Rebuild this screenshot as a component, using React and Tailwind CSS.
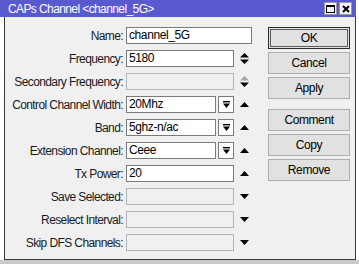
import React from 'react';

const font = { fontFamily: '"Liberation Sans", Arial, sans-serif' };

// small arrow glyphs drawn to the right of the fields
const UpDown = ({ dimUp }) => (
    <svg width="9" height="11" viewBox="0 0 9 11">
        <polygon points="4.5,0 9,4.5 0,4.5" fill={dimUp ? '#a6a6a6' : '#000'}/>
        <polygon points="0,6.5 9,6.5 4.5,11" fill="#000"/>
    </svg>
);

const Up = () => (
    <svg width="9" height="5" viewBox="0 0 9 5">
        <polygon points="4.5,0 9,5 0,5" fill="#000"/>
    </svg>
);

const Down = () => (
    <svg width="9" height="5" viewBox="0 0 9 5">
        <polygon points="0,0 9,0 4.5,5" fill="#000"/>
    </svg>
);

const DropIcon = () => (
    <svg width="7" height="7" viewBox="0 0 7 7">
        <rect x="0" y="0" width="7" height="1.4" fill="#000"/>
        <polygon points="0,2.5 7,2.5 3.5,7" fill="#000"/>
    </svg>
);

const Row = ({ label, value, kind = 'plain', disabled, arrow }) => (
    <div className="flex items-center h-[17px]">
        <div className="w-[119px] flex justify-end pr-[3px] text-[12px] tracking-[-0.6px] text-[#1a1a1a] whitespace-nowrap">
            <span>{label}</span>
        </div>
        {kind === 'full' ? (
            <div className="w-[126px] h-[17px] bg-white border border-[#7a7a7a] px-[2px] text-[12px] tracking-[-0.4px] leading-[15px] text-black">{value}</div>
        ) : (
            <>
                {kind === 'drop' ? (
                    <div className="flex items-center">
                        <div className="w-[90px] h-[17px] bg-white border border-[#7a7a7a] px-[2px] text-[12px] tracking-[-0.4px] leading-[15px] text-black">{value}</div>
                        <div className="ml-[2px] w-[16px] h-[17px] bg-white border border-[#7a7a7a] flex items-center justify-center">
                            <DropIcon/>
                        </div>
                    </div>
                ) : (
                    <div className={`w-[108px] h-[17px] border px-[2px] text-[12px] tracking-[-0.4px] leading-[15px] text-black ${disabled ? 'bg-[#f0f0f0] border-[#b4b4b4]' : 'bg-white border-[#7a7a7a]'}`}>{value}</div>
                )}
                <div className="w-[20px] flex items-center justify-center">{arrow}</div>
            </>
        )}
    </div>
);

const Btn = ({ children, main }) => (
    <div className={`h-[22px] flex items-center justify-center text-[12px] tracking-[-0.4px] text-black bg-[#e1e1e1] border ${main ? 'border-[#2b2b2b] shadow-[inset_0_0_0_1px_#e1e1e1,inset_0_0_0_2px_#5c5c5c]' : 'border-[#adadad]'}`}>
        {children}
    </div>
);

export default function App() {
    return (
        <div className="w-[359px] h-[264px] bg-white overflow-hidden flex flex-col" style={font}>
            {/* title bar */}
            <div className="w-[356px] h-[17px] bg-[#5959d0] flex items-center justify-between pl-[8px] pr-[4px] shrink-0">
                <span className="text-white text-[12px] tracking-[-0.6px] leading-none">CAPs Channel &lt;channel_5G&gt;</span>
                <div className="flex gap-[2px]">
                    <div className="w-[13px] h-[13px] bg-[#f4f4f4] border border-[#9a9a9a] flex items-center justify-center">
                        <div className="w-[9px] h-[8px] border border-black border-t-2"/>
                    </div>
                    <div className="w-[13px] h-[13px] bg-[#f4f4f4] border border-[#9a9a9a] flex items-center justify-center">
                        <svg width="8" height="8" viewBox="0 0 8 8">
                            <path d="M1 1 L7 7 M7 1 L1 7" stroke="#000" strokeWidth="2"/>
                        </svg>
                    </div>
                </div>
            </div>

            {/* body */}
            <div className="ml-[4px] w-[352px] h-[243px] bg-[#f0f0f0] border-l border-r border-b border-[#3a3a3a] flex shrink-0">
                <div className="flex flex-col gap-[6px] pt-[10px] pl-[2px]">
                    <Row label="Name:" value="channel_5G" kind="full"/>
                    <Row label="Frequency:" value="5180" arrow={<UpDown/>}/>
                    <Row label="Secondary Frequency:" disabled arrow={<UpDown dimUp/>}/>
                    <Row label="Control Channel Width:" value="20Mhz" kind="drop" arrow={<Up/>}/>
                    <Row label="Band:" value="5ghz-n/ac" kind="drop" arrow={<Up/>}/>
                    <Row label="Extension Channel:" value="Ceee" kind="drop" arrow={<Up/>}/>
                    <Row label="Tx Power:" value="20" arrow={<Up/>}/>
                    <Row label="Save Selected:" disabled arrow={<Down/>}/>
                    <Row label="Reselect Interval:" disabled arrow={<Down/>}/>
                    <Row label="Skip DFS Channels:" disabled arrow={<Down/>}/>
                </div>
                <div className="ml-[14px] w-[82px] pt-[10px] flex flex-col">
                    <div className="flex flex-col gap-[3px]">
                        <Btn main>OK</Btn>
                        <Btn>Cancel</Btn>
                        <Btn>Apply</Btn>
                    </div>
                    <div className="flex flex-col gap-[3px] mt-[10px]">
                        <Btn>Comment</Btn>
                        <Btn>Copy</Btn>
                        <Btn>Remove</Btn>
                    </div>
                </div>
            </div>

            <div className="flex-1 bg-[#c8c8c8]"/>
        </div>
    );
}
